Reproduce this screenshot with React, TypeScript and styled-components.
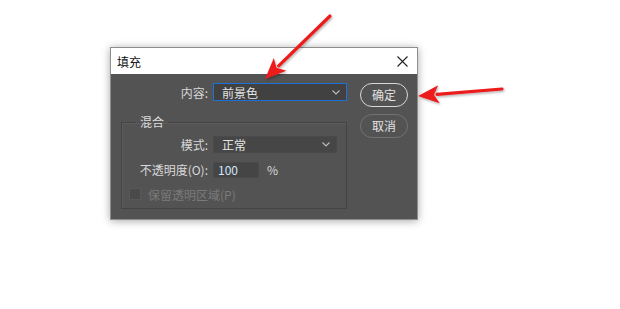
import React from 'react';
import styled, { createGlobalStyle } from 'styled-components';

const GlobalStyle = createGlobalStyle`
  html, body {
    margin: 0;
    background: #ffffff;
  }
  body {
    font-family: "Noto Sans CJK SC", "Liberation Sans", sans-serif;
  }
`;

const Page = styled.div`
  position: relative;
  width: 620px;
  height: 309px;
  box-sizing: border-box;
  padding: 47px 0 0 110px;
  overflow: hidden;
`;

const Dialog = styled.div`
  width: 308px;
  box-sizing: border-box;
  border: 1px solid #8e8e8e;
  box-shadow: 0 1px 8px rgba(0, 0, 0, 0.35);
`;

const TitleBar = styled.div`
  height: 26px;
  background: #ffffff;
  display: flex;
  align-items: center;
  justify-content: space-between;
  padding: 0 9px 0 6px;
  font-size: 12px;
  color: #111;
`;

const Body = styled.div`
  background: #535353;
  height: 145px;
  box-sizing: border-box;
  display: flex;
  padding: 9px 0 0 10px;
`;

const Main = styled.div`
  width: 226px;
`;

const Buttons = styled.div`
  margin-left: 13px;
  width: 48px;
  display: flex;
  flex-direction: column;
  gap: 7px;
`;

const Button = styled.button<{ $primary?: boolean }>`
  height: 24px;
  box-sizing: border-box;
  border-radius: 12px;
  border: ${(p) => (p.$primary ? '1.5px solid #d8d8d8' : '1.5px solid #727272')};
  background: transparent;
  color: #e2e2e2;
  font-family: inherit;
  font-size: 12px;
  padding: 0;
  line-height: 20px;
`;

const Row = styled.div<{ $labelWidth: number }>`
  display: flex;
  align-items: center;
  gap: 5px;
  & > label {
    width: ${(p) => p.$labelWidth}px;
    text-align: right;
    font-size: 12px;
    color: #d8d8d8;
    white-space: nowrap;
  }
`;

const Select = styled.div<{ $width: number; $height: number; $focused?: boolean }>`
  width: ${(p) => p.$width}px;
  height: ${(p) => p.$height}px;
  box-sizing: border-box;
  display: flex;
  align-items: center;
  justify-content: space-between;
  padding: 0 6px 0 8px;
  background: ${(p) => (p.$focused ? '#414141' : '#464646')};
  border: 1px solid ${(p) => (p.$focused ? '#1f6fd8' : '#4a4a4a')};
  font-size: 12px;
  color: #e4e4e4;
`;

const Group = styled.fieldset`
  margin: 14px 0 0 0;
  padding: 7px 0 7px 0;
  width: 226px;
  box-sizing: border-box;
  border: 1px solid #434343;
  box-shadow: inset 1px 1px 0 #5c5c5c;
  display: flex;
  flex-direction: column;
  gap: 8px;
`;

const Legend = styled.legend`
  margin-left: 14px;
  padding: 0 4px;
  font-size: 12px;
  line-height: 14px;
  color: #dedede;
`;

const Input = styled.div`
  width: 46px;
  height: 16px;
  box-sizing: border-box;
  background: #454545;
  border: 1px solid #4b4b4b;
  padding-left: 4px;
  font-size: 12px;
  line-height: 14px;
  color: #cfe6ff;
`;

const Unit = styled.span`
  margin-left: 3px;
  font-size: 12px;
  color: #d8d8d8;
`;

const CheckRow = styled.div`
  display: flex;
  align-items: center;
  gap: 7px;
  padding: 1px 0 0 7px;
  height: 14px;
`;

const Box = styled.span`
  width: 12px;
  height: 12px;
  box-sizing: border-box;
  background: #4a4a4a;
  border: 1px solid #585858;
`;

const Disabled = styled.span`
  font-size: 12px;
  color: #7a7a7a;
`;

const Arrows = styled.svg`
  position: absolute;
  left: 0;
  top: 0;
  pointer-events: none;
`;

const Chevron: React.FC = () => (
  <svg width="8" height="5" viewBox="0 0 8 5">
    <path d="M0.5 0.5 L4 4 L7.5 0.5" fill="none" stroke="#bdbdbd" strokeWidth="1.1" />
  </svg>
);

const Close: React.FC = () => (
  <svg width="11" height="11" viewBox="0 0 11 11">
    <path d="M0.5 0.5 L10.5 10.5 M10.5 0.5 L0.5 10.5" stroke="#222" strokeWidth="1.1" />
  </svg>
);

const Arrow: React.FC<{ x1: number; y1: number; x2: number; y2: number }> = ({ x1, y1, x2, y2 }) => {
  const dx = x2 - x1;
  const dy = y2 - y1;
  const len = Math.hypot(dx, dy);
  const ux = dx / len;
  const uy = dy / len;
  const headLen = 21;
  const headW = 9;
  const bx = x2 - ux * headLen;
  const by = y2 - uy * headLen;
  const px = -uy * headW;
  const py = ux * headW;
  return (
    <g filter="url(#shadow)">
      <line x1={x1} y1={y1} x2={bx + ux * 2} y2={by + uy * 2} stroke="#ec1c1c" strokeWidth="3.2" strokeLinecap="round" />
      <polygon points={`${x2},${y2} ${bx + px},${by + py} ${bx + ux * 5},${by + uy * 5} ${bx - px},${by - py}`} fill="#ec1c1c" />
    </g>
  );
};

export default function App() {
  return (
    <>
      <GlobalStyle />
      <Page>
        <Dialog>
          <TitleBar>
            <span>填充</span>
            <Close />
          </TitleBar>
          <Body>
            <Main>
              <Row $labelWidth={87}>
                <label>内容:</label>
                <Select $width={134} $height={18} $focused>
                  <span>前景色</span>
                  <Chevron />
                </Select>
              </Row>
              <Group>
                <Legend>混合</Legend>
                <Row $labelWidth={86}>
                  <label>模式:</label>
                  <Select $width={124} $height={17}>
                    <span>正常</span>
                    <Chevron />
                  </Select>
                </Row>
                <Row $labelWidth={86}>
                  <label>不透明度(O):</label>
                  <Input>100</Input>
                  <Unit>%</Unit>
                </Row>
                <CheckRow>
                  <Box />
                  <Disabled>保留透明区域(P)</Disabled>
                </CheckRow>
              </Group>
            </Main>
            <Buttons>
              <Button $primary>确定</Button>
              <Button>取消</Button>
            </Buttons>
          </Body>
        </Dialog>
        <Arrows width="620" height="309" viewBox="0 0 620 309">
          <defs>
            <filter id="shadow" x="-20%" y="-20%" width="140%" height="140%">
              <feDropShadow dx="1" dy="1.5" stdDeviation="1.2" floodColor="#000" floodOpacity="0.3" />
            </filter>
          </defs>
          <Arrow x1={330} y1={16} x2={265} y2={79} />
          <Arrow x1={502} y1={89} x2={418} y2={96} />
        </Arrows>
      </Page>
    </>
  );
}
